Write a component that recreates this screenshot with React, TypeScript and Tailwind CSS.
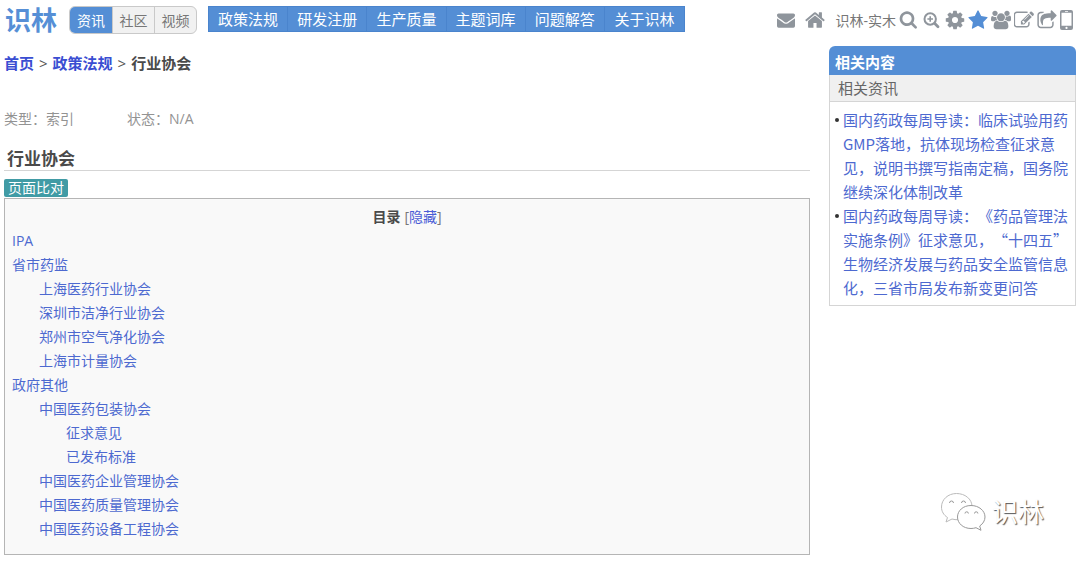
import type { ReactNode } from "react";

const tabs = ["资讯", "社区", "视频"];

const navItems = ["政策法规", "研发注册", "生产质量", "主题词库", "问题解答", "关于识林"];

const tocItems = [
  { label: "IPA", level: 0 },
  { label: "省市药监", level: 0 },
  { label: "上海医药行业协会", level: 1 },
  { label: "深圳市洁净行业协会", level: 1 },
  { label: "郑州市空气净化协会", level: 1 },
  { label: "上海市计量协会", level: 1 },
  { label: "政府其他", level: 0 },
  { label: "中国医药包装协会", level: 1 },
  { label: "征求意见", level: 2 },
  { label: "已发布标准", level: 2 },
  { label: "中国医药企业管理协会", level: 1 },
  { label: "中国医药质量管理协会", level: 1 },
  { label: "中国医药设备工程协会", level: 1 },
];

const indents = ["pl-0", "pl-[27px]", "pl-[54px]"];

const news = [
  "国内药政每周导读：临床试验用药GMP落地，抗体现场检查征求意见，说明书撰写指南定稿，国务院继续深化体制改革",
  "国内药政每周导读：《药品管理法实施条例》征求意见，“十四五”生物经济发展与药品安全监管信息化，三省市局发布新变更问答",
];

const paths = {
  mail: "M1792 710v794q0 66-47 113t-113 47h-1472q-66 0-113-47t-47-113v-794q44 49 101 87 362 246 497 345 57 42 92.5 65.5t94.5 48 110 24.5h2q51 0 110-24.5t94.5-48 92.5-65.5q170-123 498-345 57-39 100-87zm0-294q0 79-49 151t-122 123q-376 261-468 325-10 7-42.5 31t-54 38.5-52 32.5-57.5 27-50 9h-2q-23 0-50-9t-57.5-27-52-32.5-54-38.5-42.5-31q-91-64-262-182.5t-205-142.5q-62-42-117-115.5t-55-136.5q0-78 41.5-130t118.5-52h1472q65 0 112.5 47t47.5 113z",
  home: "M1472 992v480q0 26-19 45t-45 19h-384v-384h-256v384h-384q-26 0-45-19t-19-45v-480q0-1 .5-3t.5-3l575-474 575 474q1 2 1 6zm223-69l-62 74q-8 9-21 11h-3q-13 0-21-7l-692-577-692 577q-12 8-24 7-13-2-21-11l-62-74q-8-10-7-23.5t11-21.5l719-599q32-26 76-26t76 26l244 204v-195q0-14 9-23t23-9h192q14 0 23 9t9 23v408l219 182q10 8 11 21.5t-7 23.5z",
  search: "M1216 832q0-185-131.5-316.5t-316.5-131.5-316.5 131.5-131.5 316.5 131.5 316.5 316.5 131.5 316.5-131.5 131.5-316.5zm512 832q0 52-38 90t-90 38q-54 0-90-38l-343-342q-179 124-399 124-143 0-273.5-55.5t-225-150-150-225-55.5-273.5 55.5-273.5 150-225 225-150 273.5-55.5 273.5 55.5 225 150 150 225 55.5 273.5q0 220-124 399l343 343q37 37 37 90z",
  cog: "M1152 896q0-106-75-181t-181-75-181 75-75 181 75 181 181 75 181-75 75-181zm512-109v222q0 12-8 23t-20 13l-185 28q-19 54-39 91 35 50 107 138 10 12 10 25t-9 23q-27 37-99 108t-94 71q-12 0-26-9l-138-108q-44 23-91 38-16 136-29 186-7 28-36 28h-222q-14 0-24.5-8.5t-11.5-21.5l-28-184q-49-16-90-37l-141 107q-10 9-25 9-14 0-25-11-126-114-165-168-7-10-7-23 0-12 8-23 15-21 51-66.5t54-70.5q-27-50-41-99l-183-27q-13-2-21-12.5t-8-23.5v-222q0-12 8-23t19-13l186-28q14-46 39-92-40-57-107-138-10-12-10-24 0-10 9-23 26-36 98.5-107.5t94.5-71.5q13 0 26 10l138 107q44-23 91-38 16-136 29-186 7-28 36-28h222q14 0 24.5 8.5t11.5 21.5l28 184q49 16 90 37l142-107q9-9 24-9 13 0 25 10 129 119 165 170 7 8 7 22 0 12-8 23-15 21-51 66.5t-54 70.5q26 50 41 98l183 28q13 2 21 12.5t8 23.5z",
  star: "M1728 647q0 22-26 48l-363 354 86 500q1 7 1 20 0 21-10.5 35.5t-30.5 14.5q-19 0-40-12l-449-236-449 236q-22 12-40 12-21 0-31.5-14.5t-10.5-35.5q0-6 2-20l86-500-364-354q-25-27-25-48 0-37 56-46l502-73 225-455q19-41 49-41t49 41l225 455 502 73q56 9 56 46z",
  users: "M593 896q-162 5-265 128h-134q-82 0-138-40.5t-56-118.5q0-353 124-353 6 0 43.5 21t97.5 42.5 119 21.5q67 0 133-23-5 37-5 66 0 159 93 293zm1071 637q0 120-73 189.5t-194 69.5h-874q-121 0-194-69.5t-73-189.5q0-53 3.5-103.5t14-109 26.5-108.5 43-97.5 62-81 85.5-53.5 111.5-20q10 0 43 21.5t73 48 107 48 135 21.5 135-21.5 107-48 73-48 43-21.5q61 0 111.5 20t85.5 53.5 62 81 43 97.5 26.5 108.5 14 109 3.5 103.5zm-1024-1277q0 106-75 181t-181 75-181-75-75-181 75-181 181-75 181 75 75 181zm704 384q0 159-112.5 271.5t-271.5 112.5-271.5-112.5-112.5-271.5 112.5-271.5 271.5-112.5 271.5 112.5 112.5 271.5zm576 225q0 78-56 118.5t-138 40.5h-134q-103-123-265-128 93-134 93-293 0-29-5-66 66 23 133 23 59 0 119-21.5t97.5-42.5 43.5-21q124 0 124 353zm-128-609q0 106-75 181t-181 75-181-75-75-181 75-181 181-75 181 75 75 181z",
  edit: "M888 1184l116-116-152-152-116 116v56h96v96h56zm440-720q-16-16-33 1l-350 350q-17 17-1 33t33-1l350-350q17-17 1-33zm80 594v190q0 119-84.5 203.5t-203.5 84.5h-832q-119 0-203.5-84.5t-84.5-203.5v-832q0-119 84.5-203.5t203.5-84.5h832q63 0 117 25 15 7 18 23 3 17-9 29l-49 49q-14 14-32 8-23-6-45-6h-832q-66 0-113 47t-47 113v832q0 66 47 113t113 47h832q66 0 113-47t47-113v-126q0-13 9-22l64-64q15-15 35-7t20 29zm-96-738l288 288-672 672h-288v-288zm444 132l-92 92-288-288 92-92q28-28 68-28t68 28l152 152q28 28 28 68t-28 68z",
  share: "M1472 989v259q0 119-84.5 203.5t-203.5 84.5h-832q-119 0-203.5-84.5t-84.5-203.5v-832q0-119 84.5-203.5t203.5-84.5h255q13 0 22.5 9.5t9.5 22.5q0 27-26 32-77 26-133 60-10 4-16 4h-112q-66 0-113 47t-47 113v832q0 66 47 113t113 47h832q66 0 113-47t47-113v-214q0-19 18-29 28-13 54-37 16-16 35-8 21 9 21 29zm237-496l-384 384q-18 19-45 19-12 0-25-5-39-17-39-59v-192h-160q-323 0-438 131-119 137-74 473 3 23-20 34-8 2-12 2-16 0-26-13-10-14-21-31t-39.5-68.5-49.5-99.5-38.5-114-17.5-122q0-49 3.5-91t14-90 28-88 47-81.5 68.5-74 94.5-61.5 124.5-48.5 159.5-30.5 196.5-11h160v-192q0-42 39-59 13-5 25-5 26 0 45 19l384 384q19 19 19 45t-19 45z",
};

function Glyph({ d, box = "0 0 1792 1792" }: { d: string; box?: string }) {
  return (
    <svg viewBox={box} className="size-full fill-current" aria-hidden="true">
      <path d={d} />
    </svg>
  );
}

function ZoomInIcon() {
  return (
    <svg viewBox="-1 -1 20 20" className="size-full fill-none stroke-current" aria-hidden="true">
      <circle cx="7.2" cy="8" r="5.7" strokeWidth="2" />
      <path d="M4.4 8h5.6M7.2 5.2v5.6" strokeWidth="1.6" />
      <path d="M11.8 12.5l3.2 3.2" strokeWidth="2.8" strokeLinecap="round" />
    </svg>
  );
}

function PhoneIcon() {
  return (
    <svg viewBox="0 0 13 20" className="size-full" aria-hidden="true">
      <path
        fill="currentColor"
        fillRule="evenodd"
        d="M2 0h9a2 2 0 0 1 2 2v16a2 2 0 0 1-2 2H2a2 2 0 0 1-2-2V2a2 2 0 0 1 2-2zM1.5 2.8v12.9h10V2.8zM5 1v.8h3V1zM6.500 16.800a1.100 1.100 0 1 0 0 2.200 1.100 1.100 0 0 0 0-2.200z"
      />
    </svg>
  );
}

function IconLink({ label, className = "size-5", children }: { label: string; className?: string; children: ReactNode }) {
  return (
    <a href="#" aria-label={label} className={`block shrink-0 ${className}`}>
      {children}
    </a>
  );
}

function Header() {
  return (
    <header className="flex items-start pt-[6px] pr-[7px] pl-[5px]">
      <a href="#" className="mr-3 text-[26px] leading-[28px] font-bold whitespace-nowrap text-[#568fd6]">
        识林
      </a>
      <div className="mr-[11px] flex h-7 shrink-0 overflow-hidden rounded-md border border-[#c9c9c9] bg-[#f1f1f1] text-[14px]">
        {tabs.map((tab, i) => (
          <button
            key={tab}
            type="button"
            className={
              i === 0
                ? "w-[42px] bg-[#548ed5] text-white"
                : "w-[42px] border-l border-[#c9c9c9] text-[#777]"
            }
          >
            {tab}
          </button>
        ))}
      </div>
      <nav className="grid h-[26px] w-[477px] grid-cols-6 border border-[#4a84cd] bg-[#548ed5] text-[15px] text-white">
        {navItems.map((item) => (
          <a key={item} href="#" className="border-r border-[#4a84cd] text-center leading-6 whitespace-nowrap last:border-r-0">
            {item}
          </a>
        ))}
      </nav>
      <div className="ml-auto flex h-7 items-center text-[#8f959c]">
        <div className="mr-[3px] flex items-center gap-[10px]">
          <IconLink label="消息" className="size-[18px]">
            <Glyph d={paths.mail} />
          </IconLink>
          <IconLink label="主页">
            <Glyph d={paths.home} box="64 64 1664 1664" />
          </IconLink>
          <a href="#" className="text-[14px] whitespace-nowrap text-[#777]">
            识林-实木
          </a>
        </div>
        <div className="flex items-center gap-[3px]">
          <IconLink label="搜索">
            <Glyph d={paths.search} box="0 0 1920 1920" />
          </IconLink>
          <IconLink label="放大">
            <ZoomInIcon />
          </IconLink>
          <IconLink label="设置">
            <Glyph d={paths.cog} box="64 64 1664 1664" />
          </IconLink>
          <IconLink label="收藏" className="size-5 text-[#548ed5]">
            <Glyph d={paths.star} box="32 0 1728 1728" />
          </IconLink>
          <IconLink label="用户">
            <Glyph d={paths.users} box="0 -64 1920 1920" />
          </IconLink>
          <IconLink label="编辑">
            <Glyph d={paths.edit} box="32 0 1760 1760" />
          </IconLink>
          <IconLink label="分享">
            <Glyph d={paths.share} box="32 -32 1728 1728" />
          </IconLink>
          <IconLink label="手机版" className="h-5 w-[13px]">
            <PhoneIcon />
          </IconLink>
        </div>
      </div>
    </header>
  );
}

function Toc() {
  return (
    <section className="mt-px border border-[#b5b5b5] bg-[#f9f9f9] px-[7px] pt-[6px] pb-[13px] text-[14px] leading-6">
      <div className="flex h-6 items-center justify-center gap-1">
        <h2 className="font-bold text-[#4a4a4a]">目录</h2>
        <span className="text-[#777]">
          [<button type="button" className="text-[#4a5cd6]">隐藏</button>]
        </span>
      </div>
      <ul>
        {tocItems.map((item) => (
          <li key={item.label} className={indents[item.level]}>
            <a href="#" className="text-[#4d69d0]">{item.label}</a>
          </li>
        ))}
      </ul>
    </section>
  );
}

function Sidebar() {
  return (
    <aside className="mt-3 w-[247px] shrink-0 text-[15px]">
      <h2 className="rounded-t-md bg-[#548ed5] px-[6px] pt-[3px] leading-[26px] font-bold text-white">相关内容</h2>
      <div className="border border-t-0 border-[#d5d5d5]">
        <h3 className="border-b border-[#d5d5d5] bg-[#f0f0f0] px-2 leading-[26px] text-[#666]">相关资讯</h3>
        <ul className="pt-[6px] pr-[6px] pb-[5px] pl-[13px] leading-6 [font-family:'Noto_Sans_CJK_SC',sans-serif] [text-spacing-trim:space-all]">
          {news.map((title) => (
            <li key={title} className="relative">
              <span className="absolute top-[10px] -left-2 size-1 rounded-full bg-[#333]" />
              <a href="#" className="text-[#4d69d0]">{title}</a>
            </li>
          ))}
        </ul>
      </div>
    </aside>
  );
}

function Watermark() {
  return (
    <div className="absolute right-9 bottom-[30px] flex items-center gap-[6px]">
      <svg viewBox="0 0 46 40" className="h-10 w-[46px] fill-white stroke-[#999]" strokeWidth="1" aria-hidden="true">
        <path d="M16.500 1.500C8 1.500 1.500 7.500 1.500 15c0 4.500 2.200 8 6 10.500L6 30l6-3c2 .6 4 .8 6 .7 9-.5 14-6.500 14-13.200C32 7 25 1.500 16.500 1.500z" stroke="#bbb" />
        <path d="M31 13.500c-8 0-13.500 5.300-13.500 11.500S23 36.500 31 36.500c1.700 0 3.400-.3 5-.8l5 2.600-1.300-4.300c3.300-2.200 5.300-5.500 5.300-9 0-6.200-6-11.500-14-11.500z" />
        <path d="M9.500 11a2 2 0 1 1 4 0M21.500 11a2 2 0 1 1 4 0M25 21.500a1.700 1.700 0 1 1 3.400 0M34.500 21.500a1.700 1.700 0 1 1 3.400 0" fill="none" />
      </svg>
      <span className="text-[26px] leading-10 text-white [text-shadow:1px_1px_1px_#555]">识林</span>
    </div>
  );
}

export default function App() {
  return (
    <div
      lang="zh-CN"
      className="relative bg-white pb-[7px] text-[#555] [font-family:'Open_Sans','Noto_Sans_CJK_SC',sans-serif]"
    >
      <Header />
      <div className="flex items-start gap-[19px] pr-1 pl-1">
        <main className="min-w-0 flex-1 pt-[17px]">
          <nav aria-label="面包屑" className="flex gap-[5px] text-[15px] leading-6">
            <a href="#" className="font-bold text-[#3a4ed2]">首页</a>
            <span>&gt;</span>
            <a href="#" className="font-bold text-[#3a4ed2]">政策法规</a>
            <span>&gt;</span>
            <span className="font-bold text-[#4a4a4a]">行业协会</span>
          </nav>
          <div className="mt-8 flex gap-[53px] text-[14px] leading-6 text-[#939393]">
            <span>类型：索引</span>
            <span>状态：N/A</span>
          </div>
          <h1 className="mt-[17px] border-b border-[#d5d5d5] pl-[3px] text-[17px] leading-[22px] font-bold text-[#4a4a4a]">行业协会</h1>
          <button type="button" className="mt-2 block h-[18px] rounded-xs bg-[#419ba5] px-1 text-[14px] leading-[18px] text-white">
            页面比对
          </button>
          <Toc />
        </main>
        <Sidebar />
      </div>
      <Watermark />
    </div>
  );
}
